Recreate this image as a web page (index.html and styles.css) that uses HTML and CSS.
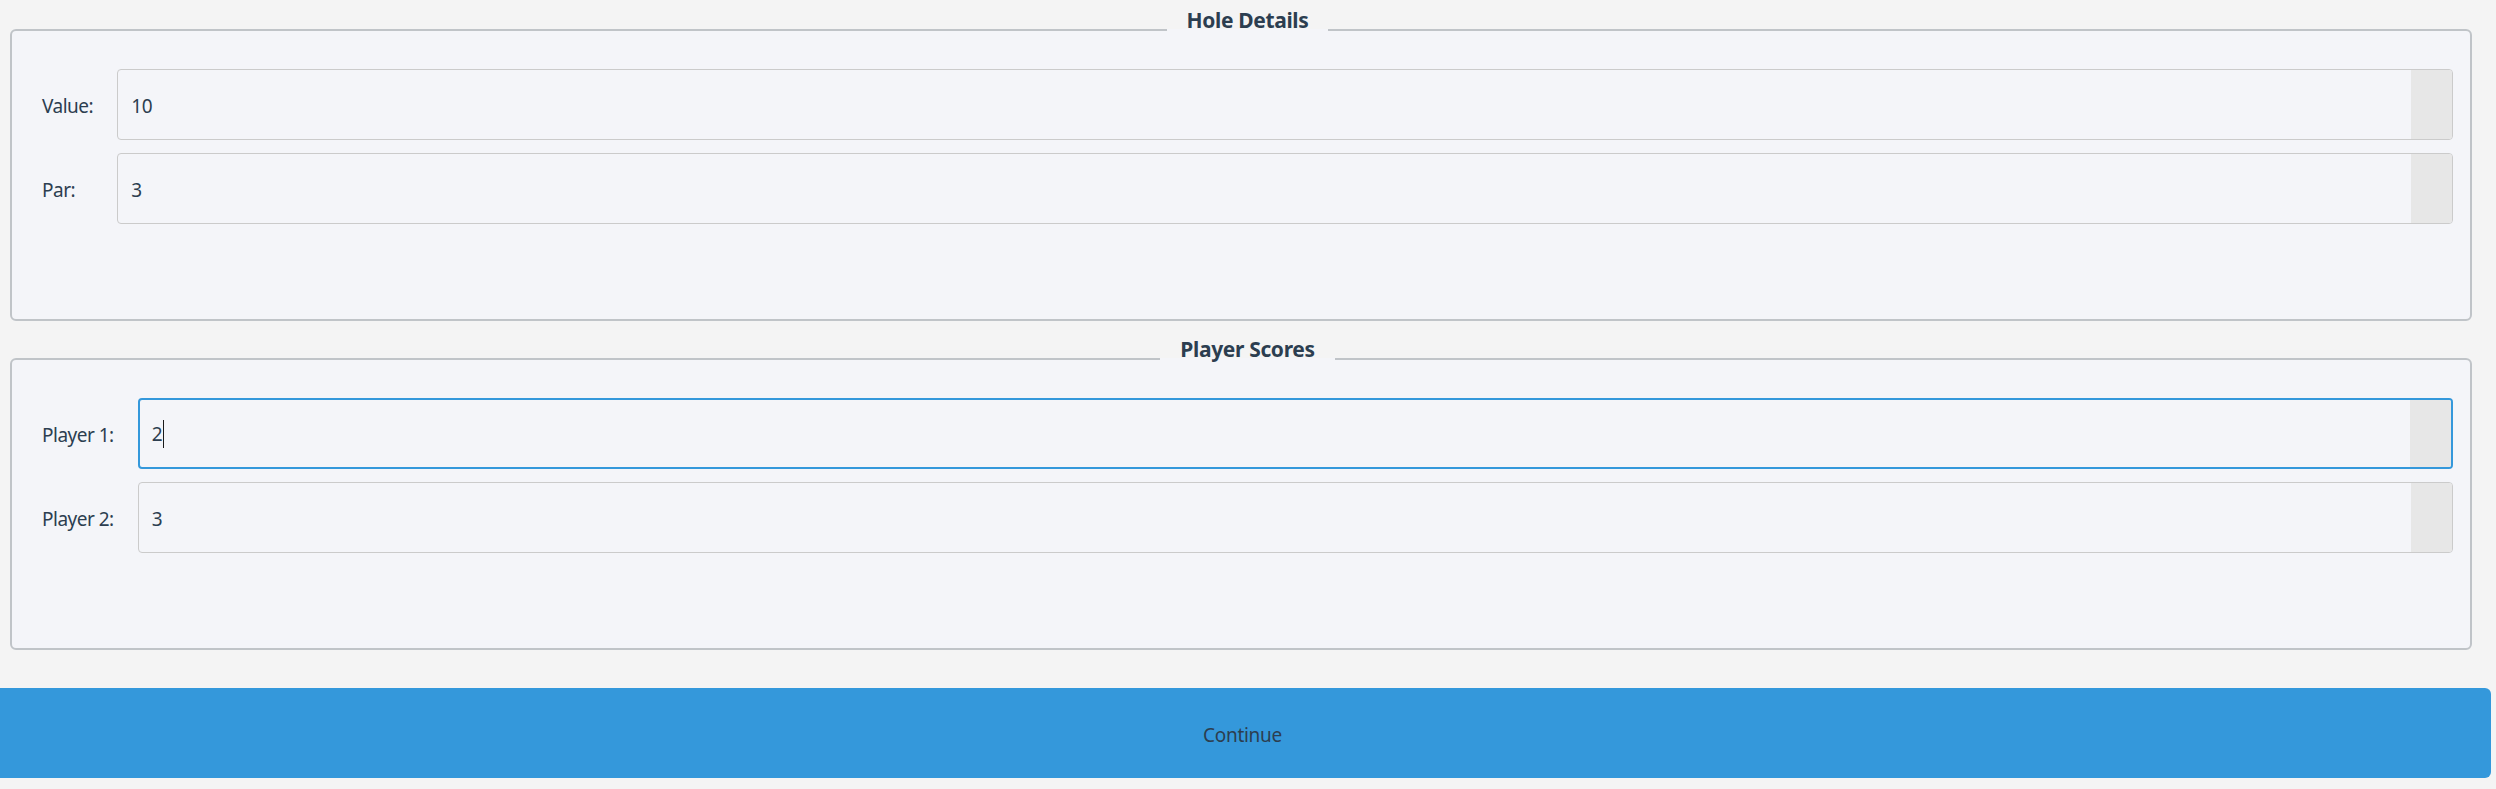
FILE: index.html
```html
<!DOCTYPE html>
<html lang="en">
<head>
<meta charset="utf-8">
<title>Hole Entry</title>
<link rel="stylesheet" href="styles.css">
</head>
<body>
<main class="page">
  <fieldset class="group">
    <legend class="group-title">Hole Details</legend>
    <div class="rows">
      <span class="lbl">Value:</span>
      <div class="field"><span class="val">10</span><span class="spin"></span></div>
      <span class="lbl">Par:</span>
      <div class="field"><span class="val">3</span><span class="spin"></span></div>
    </div>
  </fieldset>
  <fieldset class="group group-scores">
    <legend class="group-title">Player Scores</legend>
    <div class="rows">
      <span class="lbl">Player 1:</span>
      <div class="field field-focus"><span class="val">2<span class="caret"></span></span><span class="spin"></span></div>
      <span class="lbl">Player 2:</span>
      <div class="field"><span class="val">3</span><span class="spin"></span></div>
    </div>
  </fieldset>
  <button class="continue" type="button">Continue</button>
</main>
</body>
</html>
```
FILE: styles.css
```css
html, body {
  margin: 0;
  padding: 0;
  background: #f4f4f4;
}
body {
  font-family: "Noto Sans", "Open Sans", sans-serif;
  color: #2c3e50;
}
.page {
  display: flex;
  flex-direction: column;
  padding: 4px 24px 11px 10px;
  height: 789px;
  box-sizing: border-box;
}
.group {
  margin: 0;
  border: 2px solid #c0c4c8;
  border-radius: 6px;
  background: #f4f5f9;
  padding: 13px 17px 95px 30px;
  min-width: 0;
}
.group-scores {
  margin-top: 12px;
}
.group-title {
  margin: 0 auto;
  padding: 1px 20px 21px;
  font-size: 21px;
  line-height: 30px;
  font-weight: 700;
  letter-spacing: -0.35px;
  color: #2c3e50;
}
.rows {
  display: grid;
  grid-template-columns: auto 1fr;
  column-gap: 24px;
  row-gap: 13px;
  align-items: center;
}
.lbl {
  font-size: 19px;
  letter-spacing: -0.5px;
  padding-top: 3px;
  color: #2c3e50;
}
.field {
  height: 71px;
  box-sizing: border-box;
  border: 1px solid #cbcbcb;
  border-radius: 4px;
  display: flex;
  align-items: stretch;
  overflow: hidden;
  background: #f4f5f9;
}
.field-focus {
  border: 2px solid #3498db;
}
.val {
  flex: 1;
  display: flex;
  align-items: center;
  padding: 3px 0 0 13px;
  font-size: 19px;
  letter-spacing: -0.3px;
  color: #2c3e50;
}
.field-focus .val {
  padding-left: 12px;
  padding-top: 1px;
}
.caret {
  display: inline-block;
  width: 1px;
  height: 28px;
  margin-left: 1px;
  background: #1a1a1a;
}
.spin {
  width: 41px;
  background: #e7e7e7;
}
.continue {
  margin: 38px -19px 0 -16px;
  height: 90px;
  border: none;
  border-radius: 6px;
  background: #3498db;
  color: #2c3e50;
  font-family: "Noto Sans", "Open Sans", sans-serif;
  font-size: 19px;
  letter-spacing: -0.3px;
  padding: 3px 0 0;
}
```
